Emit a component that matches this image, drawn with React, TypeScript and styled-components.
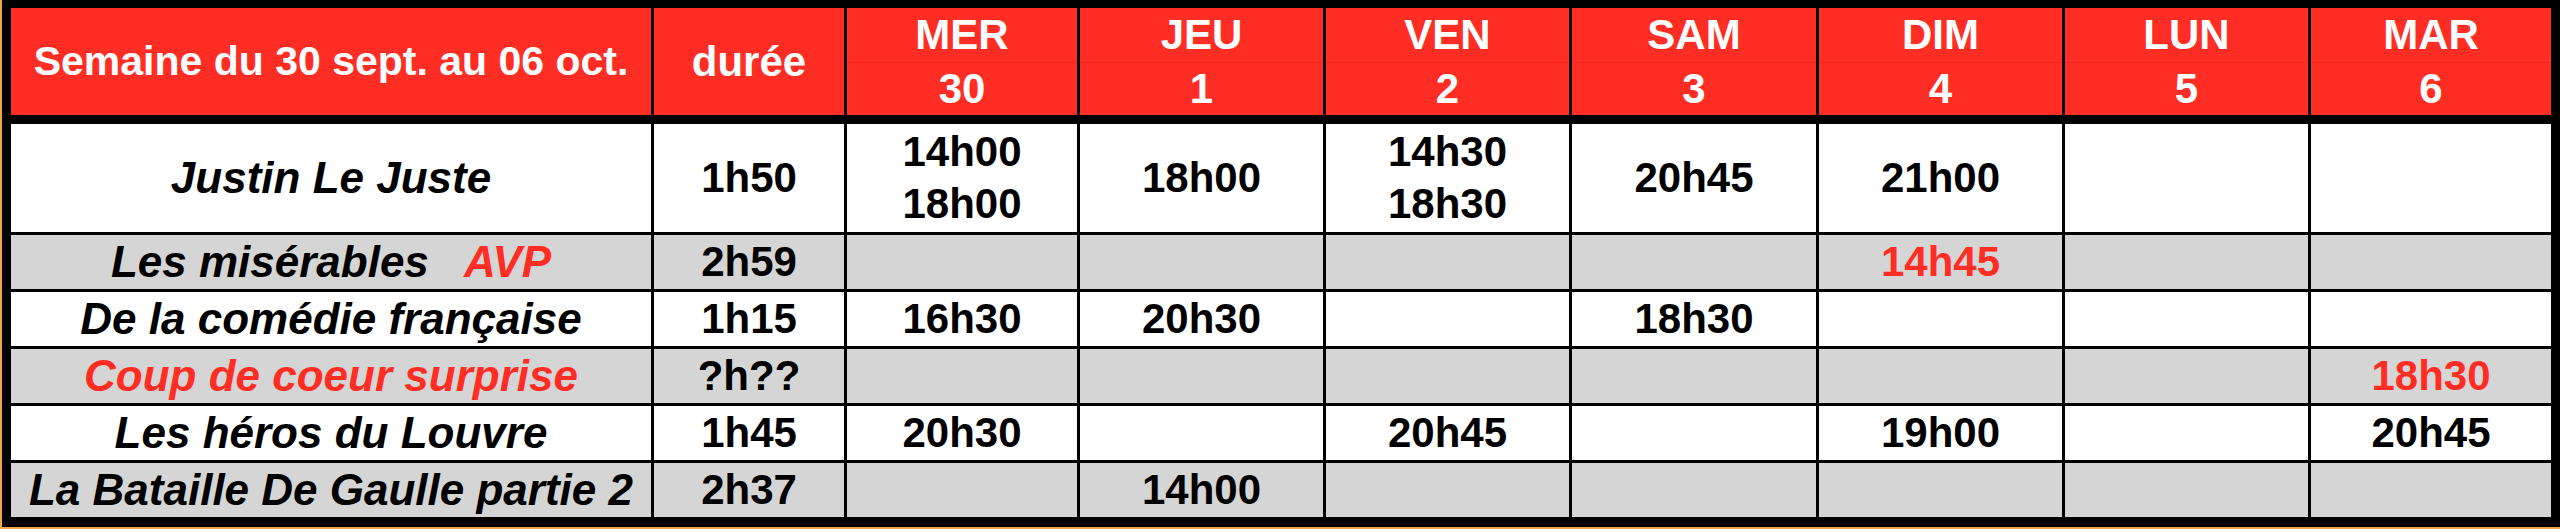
import React from 'react';
import styled, { createGlobalStyle, css } from 'styled-components';

const GlobalStyle = createGlobalStyle`
  html, body {
    margin: 0;
    padding: 0;
    background: #ffffff;
  }
  body {
    font-family: "Liberation Sans", Arial, sans-serif;
  }
`;

const colWidths = '640px 190px 230px 243px 243px 244px 243px 243px 240px';

const red = '#ff2d24';
const grey = '#d5d5d5';

const Frame = styled.div`
  width: 2560px;
  height: 529px;
  box-sizing: border-box;
  border-left: 2px solid #f2a64a;
  border-bottom: 2px solid #f2a64a;
`;

const Sheet = styled.div`
  height: 100%;
  box-sizing: border-box;
  background: #000;
  padding: 8px 9px 10px 9px;
  display: flex;
  flex-direction: column;
  gap: 9px;
`;

const HeaderRow = styled.div`
  display: grid;
  grid-template-columns: ${colWidths};
  column-gap: 3px;
  height: 107px;
`;

const HeaderCell = styled.div`
  background: ${red};
  color: #fff;
  font-weight: bold;
  font-size: 42px;
  display: flex;
  align-items: center;
  justify-content: center;
  white-space: nowrap;
`;

const WeekLabel = styled(HeaderCell)`
  font-size: 41px;
`;

const DayCell = styled.div`
  display: grid;
  grid-template-rows: 54px 53px;
  background: ${red};
  color: #fff;
  font-weight: bold;
  font-size: 42px;
`;

const DayPart = styled.div<{ $lower?: boolean }>`
  display: flex;
  align-items: center;
  justify-content: center;
  ${p =>
    p.$lower &&
    css`
      border-top: 1px solid #f2281f;
    `}
`;

const Body = styled.div`
  display: grid;
  grid-template-columns: ${colWidths};
  grid-template-rows: 108px repeat(5, 54px);
  gap: 3px;
`;

const Cell = styled.div<{ $shade: boolean; $accent?: boolean; $title?: boolean }>`
  background: ${p => (p.$shade ? grey : '#fff')};
  color: ${p => (p.$accent ? red : '#000')};
  font-weight: bold;
  font-size: ${p => (p.$title ? '44px' : '42px')};
  font-style: ${p => (p.$title ? 'italic' : 'normal')};
  line-height: 52px;
  display: flex;
  flex-direction: column;
  align-items: center;
  justify-content: center;
  white-space: pre;
  text-align: center;
`;

const Accent = styled.span`
  color: ${red};
`;

interface Show {
  title: React.ReactNode;
  accent?: boolean;
  length: string;
  times: (string | null)[];
  accentTimes?: boolean;
}

const days = [
  { name: 'MER', date: '30' },
  { name: 'JEU', date: '1' },
  { name: 'VEN', date: '2' },
  { name: 'SAM', date: '3' },
  { name: 'DIM', date: '4' },
  { name: 'LUN', date: '5' },
  { name: 'MAR', date: '6' },
];

const shows: Show[] = [
  {
    title: 'Justin Le Juste',
    length: '1h50',
    times: ['14h00\n18h00', '18h00', '14h30\n18h30', '20h45', '21h00', null, null],
  },
  {
    title: (
      <>
        Les misérables{'   '}
        <Accent>AVP</Accent>
      </>
    ),
    length: '2h59',
    times: [null, null, null, null, '14h45', null, null],
    accentTimes: true,
  },
  {
    title: 'De la comédie française',
    length: '1h15',
    times: ['16h30', '20h30', null, '18h30', null, null, null],
  },
  {
    title: 'Coup de coeur surprise',
    accent: true,
    length: '?h??',
    times: [null, null, null, null, null, null, '18h30'],
    accentTimes: true,
  },
  {
    title: 'Les héros du Louvre',
    length: '1h45',
    times: ['20h30', null, '20h45', null, '19h00', null, '20h45'],
  },
  {
    title: 'La Bataille De Gaulle partie 2',
    length: '2h37',
    times: [null, '14h00', null, null, null, null, null],
  },
];

export default function App() {
  return (
    <>
      <GlobalStyle />
      <Frame>
        <Sheet>
          <HeaderRow>
            <WeekLabel>Semaine du 30 sept. au 06 oct.</WeekLabel>
            <HeaderCell>durée</HeaderCell>
            {days.map(d => (
              <DayCell key={d.name}>
                <DayPart>{d.name}</DayPart>
                <DayPart $lower>{d.date}</DayPart>
              </DayCell>
            ))}
          </HeaderRow>
          <Body>
            {shows.map((s, i) => {
              const shade = i % 2 === 1;
              return (
                <React.Fragment key={i}>
                  <Cell $shade={shade} $title $accent={s.accent}>
                    <span>{s.title}</span>
                  </Cell>
                  <Cell $shade={shade}>{s.length}</Cell>
                  {s.times.map((t, j) => (
                    <Cell key={j} $shade={shade} $accent={s.accentTimes}>
                      {t}
                    </Cell>
                  ))}
                </React.Fragment>
              );
            })}
          </Body>
        </Sheet>
      </Frame>
    </>
  );
}
